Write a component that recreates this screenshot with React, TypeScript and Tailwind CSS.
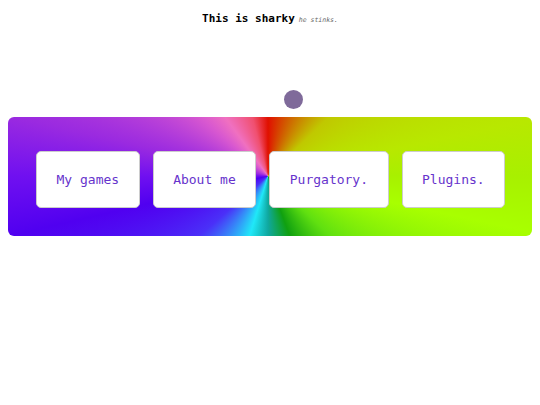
export default function App() {
  const items = ["My games", "About me", "Purgatory.", "Plugins."];
  return (
    <div className="w-[540px] h-[405px] bg-white" style={{ fontFamily: '"DejaVu Sans Mono", monospace' }}>
      <div className="pt-[11px] flex justify-center items-baseline leading-[16px]">
        <span className="text-[11px] font-bold text-black">This is sharky</span>
        <span className="text-[6.5px] italic text-[#666] ml-[4px]">he stinks.</span>
      </div>
      <div className="flex justify-center mt-[62px]">
        <div className="ml-[46px] w-[19px] h-[19px] rounded-full bg-[#7f6a9a]" />
      </div>
      <div className="mx-2 mt-[8px] rounded-[6px] pt-[34px] pb-[28px] px-[28px] flex gap-[13px] bg-[image:conic-gradient(at_260px_59px,#e01000_0deg,#d06000_20deg,#c0c800_46deg,#b8e800_78deg,#a8f000_90deg,#a8ff00_102deg,#60e010_134deg,#10a010_160deg,#10a8a0_180deg,#20e8f8_197deg,#4a30f8_229deg,#5000f0_257deg,#7010f0_270deg,#9a2ae0_283deg,#d858d0_311deg,#f070c0_324deg,#f05070_345deg,#e01000_360deg)]">
        {items.map((t) => (
          <div
            key={t}
            className="bg-white rounded-[5px] border border-[#cccccc] px-[19.5px] py-5 text-[13px] leading-[15px] text-[#6633cc] whitespace-nowrap"
          >
            {t}
          </div>
        ))}
      </div>
    </div>
  );
}
